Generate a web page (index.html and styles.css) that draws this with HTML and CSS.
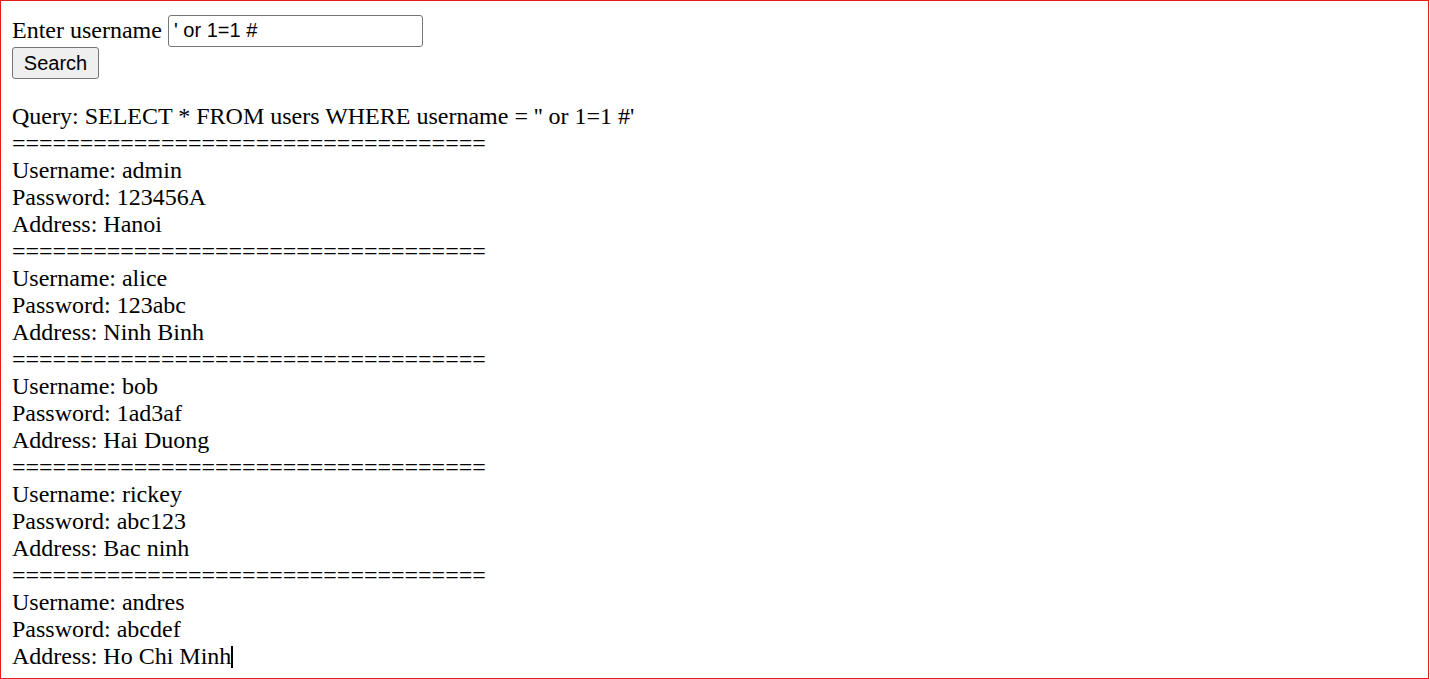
FILE: index.html
```html
<!DOCTYPE html>
<html>
<head>
<meta charset="utf-8">
<link rel="stylesheet" href="styles.css">
</head>
<body>
<div class="frame">
  <form class="search-form">
    <div class="row">
      <span class="label">Enter username</span>
      <input class="text-input" type="text" value="' or 1=1 #">
    </div>
    <div class="row">
      <button class="btn" type="button">Search</button>
    </div>
  </form>
  <div class="output">
    <div class="line">Query: SELECT * FROM users WHERE username = '' or 1=1 #'</div>
    <div class="line sep">===================================</div>
    <div class="line">Username: admin</div>
    <div class="line">Password: 123456A</div>
    <div class="line">Address: Hanoi</div>
    <div class="line sep">===================================</div>
    <div class="line">Username: alice</div>
    <div class="line">Password: 123abc</div>
    <div class="line">Address: Ninh Binh</div>
    <div class="line sep">===================================</div>
    <div class="line">Username: bob</div>
    <div class="line">Password: 1ad3af</div>
    <div class="line">Address: Hai Duong</div>
    <div class="line sep">===================================</div>
    <div class="line">Username: rickey</div>
    <div class="line">Password: abc123</div>
    <div class="line">Address: Bac ninh</div>
    <div class="line sep">===================================</div>
    <div class="line">Username: andres</div>
    <div class="line">Password: abcdef</div>
    <div class="line">Address: Ho Chi Minh<span class="caret"></span></div>
  </div>
</div>
</body>
</html>
```

FILE: styles.css
```css
html, body {
  margin: 0;
  padding: 0;
  background: #ffffff;
}

.frame {
  box-sizing: border-box;
  width: 1429px;
  height: 679px;
  border: 1px solid #e51c1c;
  padding: 14px 11px 0 11px;
  font-family: "Liberation Serif", "Times New Roman", serif;
  font-size: 24px;
  line-height: 27px;
  color: #000;
  overflow: hidden;
}

.search-form {
  margin: 0;
  display: flex;
  flex-direction: column;
  gap: 1px;
}

.row {
  display: flex;
  align-items: center;
  gap: 6px;
  height: 31px;
}

.label {
  white-space: nowrap;
}

.text-input {
  box-sizing: border-box;
  width: 255px;
  height: 32px;
  margin: 0;
  padding: 1px 5px;
  border: 1px solid #767676;
  border-radius: 3px;
  font-family: "Liberation Sans", Arial, sans-serif;
  font-size: 20px;
  color: #000;
  background: #fff;
  outline: none;
}

.btn {
  box-sizing: border-box;
  height: 32px;
  width: 87px;
  margin: 0;
  padding: 2px 10px 0 10px;
  border: 1px solid #767676;
  border-radius: 3px;
  background: #efefef;
  font-family: "Liberation Sans", Arial, sans-serif;
  font-size: 20px;
  color: #000;
}

.output {
  margin-top: 25px;
}

.line {
  white-space: pre;
  height: 27px;
}

.caret {
  display: inline-block;
  width: 2px;
  height: 22px;
  background: #000;
  vertical-align: -4px;
}
```
